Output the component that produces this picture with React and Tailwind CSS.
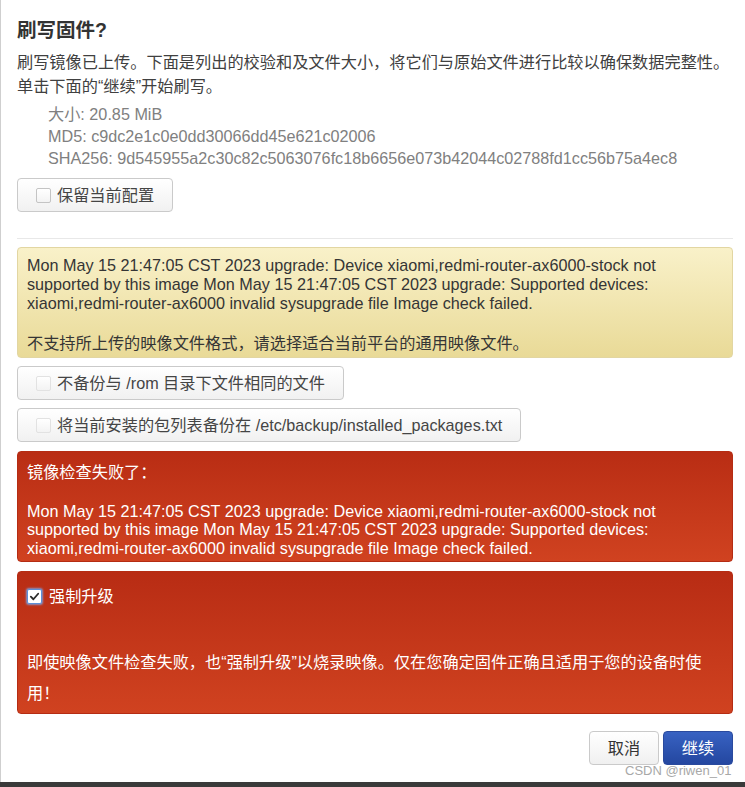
import React from "react";

function Box({ faded }) {
  return (
    <span
      className={
        "inline-block h-[15px] w-[15px] shrink-0 rounded-[2px] border bg-linear-to-b from-white to-[#f3f3f3] " +
        (faded ? "border-[#e2e2e2]" : "border-[#c4c4c4]")
      }
    />
  );
}

function CbButton({ children, faded }) {
  return (
    <div className="inline-flex h-[34px] items-center rounded-[4px] border border-[#cacaca] bg-linear-to-b from-white to-[#f1f1f1] px-[18px] text-[#454545]">
      <Box faded={faded} />
      <span className="ml-[6px] whitespace-nowrap leading-[20px]">{children}</span>
    </div>
  );
}

export default function App() {
  return (
    <div className="relative h-[787px] w-[745px] overflow-hidden bg-white font-['Liberation_Sans','Noto_Sans_CJK_SC',sans-serif] text-[16.2px] text-[#404040]">
      <div className="h-[782px] border-l border-[#cfcfcf] pl-[16px] pr-[12px] pt-[18px]">
        <h3 className="text-[19.5px] font-bold leading-[24px] text-[#333333]">刷写固件?</h3>
        <p className="mt-[8px] leading-[24px]">
          刷写镜像已上传。下面是列出的校验和及文件大小，将它们与原始文件进行比较以确保数据完整性。
          <br />
          单击下面的“继续”开始刷写。
        </p>
        <ul className="mt-[5px] pl-[31px] leading-[22px] text-[#808080]">
          <li>大小: 20.85 MiB</li>
          <li>MD5: c9dc2e1c0e0dd30066dd45e621c02006</li>
          <li>SHA256: 9d545955a2c30c82c5063076fc18b6656e073b42044c02788fd1cc56b75a4ec8</li>
        </ul>
        <div className="mt-[9px]">
          <CbButton>保留当前配置</CbButton>
        </div>
        <div className="mt-[26px] border-t border-[#e8e8e8]" />

        <div className="mt-[8px] rounded-[4px] border border-[#e2d6a2] bg-linear-to-b from-[#f9f1c9] to-[#e9da97] pb-[2px] pl-[9px] pr-[10px] pt-[8px] text-[#353535]">
          <div className="whitespace-nowrap leading-[19px]">
            Mon May 15 21:47:05 CST 2023 upgrade: Device xiaomi,redmi-router-ax6000-stock not
          </div>
          <div className="whitespace-nowrap leading-[19px]">
            supported by this image Mon May 15 21:47:05 CST 2023 upgrade: Supported devices:
          </div>
          <div className="whitespace-nowrap leading-[19px]">
            xiaomi,redmi-router-ax6000 invalid sysupgrade file Image check failed.
          </div>
          <div className="h-[19px]" />
          <div className="whitespace-nowrap leading-[23px]">
            不支持所上传的映像文件格式，请选择适合当前平台的通用映像文件。
          </div>
        </div>

        <div className="mt-[8px] flex flex-col items-start gap-[8px]">
          <CbButton faded>不备份与 /rom 目录下文件相同的文件</CbButton>
          <CbButton faded>将当前安装的包列表备份在 /etc/backup/installed_packages.txt</CbButton>
        </div>

        <div className="mt-[9px] rounded-[4px] border border-[#b52c13] bg-linear-to-b from-[#b92d14] to-[#d04220] pb-[4px] pl-[9px] pr-[10px] pt-[9px] text-white">
          <div className="leading-[22px]">镜像检查失败了：</div>
          <div className="h-[18.5px]" />
          <div className="whitespace-nowrap leading-[18.5px]">
            Mon May 15 21:47:05 CST 2023 upgrade: Device xiaomi,redmi-router-ax6000-stock not
          </div>
          <div className="whitespace-nowrap leading-[18.5px]">
            supported by this image Mon May 15 21:47:05 CST 2023 upgrade: Supported devices:
          </div>
          <div className="whitespace-nowrap leading-[18.5px]">
            xiaomi,redmi-router-ax6000 invalid sysupgrade file Image check failed.
          </div>
        </div>

        <div className="mt-[9px] rounded-[4px] border border-[#b52c13] bg-linear-to-b from-[#b82c14] to-[#d04220] pb-[4px] pl-[9px] pr-[10px] pt-[13px] text-white">
          <div className="flex h-[22px] items-center">
            <span className="flex h-[15px] w-[15px] items-center justify-center rounded-[2px] border border-[#5d8fd8] bg-white shadow-[0_0_2px_1px_rgba(120,170,240,0.8)]">
              <svg width="11" height="11" viewBox="0 0 12 12">
                <path d="M2 6.2 L4.8 9 L10 3" fill="none" stroke="#2a2a2a" strokeWidth="2" strokeLinecap="round" strokeLinejoin="round" />
              </svg>
            </span>
            <span className="ml-[7px] leading-[22px]">强制升级</span>
          </div>
          <p className="mt-[40px] whitespace-nowrap leading-[31px]">
            即使映像文件检查失败，也“强制升级”以烧录映像。仅在您确定固件正确且适用于您的设备时使
            <br />
            用！
          </p>
        </div>

        <div className="mt-[17px] flex justify-end gap-[4px]">
          <button className="flex h-[34px] w-[70px] items-center justify-center rounded-[4px] border border-[#cacaca] bg-linear-to-b from-white to-[#f0f0f0] text-[#333333]">
            取消
          </button>
          <button className="flex h-[34px] w-[70px] items-center justify-center rounded-[4px] border border-[#2a4a9e] bg-linear-to-b from-[#3862c2] to-[#2447a0] text-white">
            继续
          </button>
        </div>
      </div>
      <div className="h-[5px] bg-[#3a3a3a]" />
      <div className="absolute left-[625px] top-[763px] whitespace-nowrap text-[13px] leading-[16px] text-[#a8a8a8]">
        CSDN @riwen_01
      </div>
    </div>
  );
}
